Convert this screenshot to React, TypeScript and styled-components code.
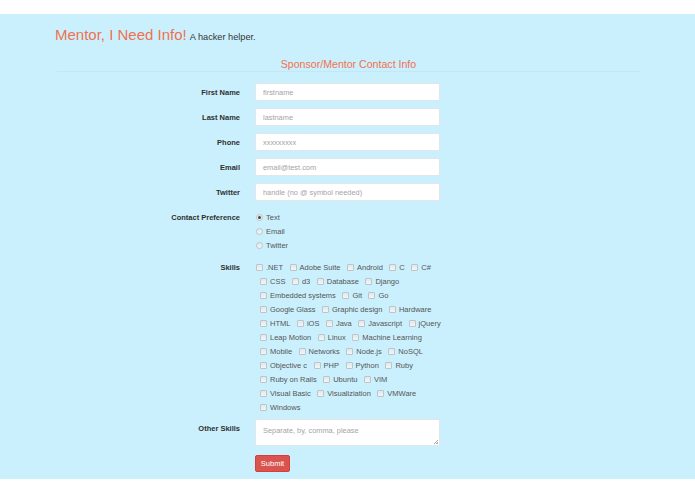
import styled, { createGlobalStyle } from 'styled-components'

const GlobalStyle = createGlobalStyle`
  body {
    margin: 0;
    background: #fff;
    font-family: "Liberation Sans", Arial, sans-serif;
  }
  * { box-sizing: border-box; }
`

const Page = styled.div`
  margin-top: 14px;
  height: 465px;
  background-color: #cbf0fd;
  padding-top: 11px;
`

const Container = styled.div`
  width: 585px;
  margin: 0 auto;
`

const Header = styled.h1`
  margin: 0;
  height: 20px;
  display: flex;
  align-items: baseline;
  font-weight: normal;
  white-space: nowrap;
`

const Title = styled.span`
  font-size: 15px;
  line-height: 20px;
  color: #f0714f;
`

const Tagline = styled.small`
  margin-left: 3px;
  font-size: 9.2px;
  color: #333;
`

const Legend = styled.h2`
  margin: 12px 0 0 2px;
  height: 15px;
  line-height: 14px;
  font-size: 10.6px;
  font-weight: normal;
  text-align: center;
  color: #f0714f;
  border-bottom: 1px solid #c3e8f5;
`

const Form = styled.form`
  margin-top: 11px;
  display: flex;
  flex-direction: column;
`

const Row = styled.div<{ $gap?: number }>`
  display: grid;
  grid-template-columns: 185px 189px;
  column-gap: 15px;
  align-items: start;
  margin-bottom: ${({ $gap }) => $gap ?? 7}px;
`

const Label = styled.label<{ $h?: number }>`
  height: ${({ $h }) => $h ?? 18}px;
  display: flex;
  align-items: center;
  justify-content: flex-end;
  font-size: 7.5px;
  font-weight: bold;
  color: #2f2f2f;
`

const Input = styled.div`
  width: 185px;
  height: 18px;
  display: flex;
  align-items: center;
  padding: 0 7px;
  background: #fff;
  border: 1px solid #e2e6e8;
  border-radius: 2px;
  font-size: 7.4px;
  color: #a4a4a4;
`

const TextArea = styled(Input)`
  position: relative;
  height: 27px;
  align-items: flex-start;
  padding-top: 6px;
`

const Grip = styled.span`
  position: absolute;
  right: 1px;
  bottom: 1px;
  width: 4px;
  height: 4px;
  background: linear-gradient(135deg, transparent 45%, #aaa 45%, #aaa 55%, transparent 55%, transparent 75%, #aaa 75%);
`

const Stack = styled.div`
  display: flex;
  flex-direction: column;
`

const Wrap = styled.div`
  display: flex;
  flex-wrap: wrap;
`

const Option = styled.span<{ $first?: boolean }>`
  height: 14px;
  display: flex;
  align-items: center;
  gap: 3px;
  margin-left: ${({ $first }) => ($first ? 1 : 5)}px;
  margin-right: 1.5px;
  font-size: 7.5px;
  color: #555;
  white-space: nowrap;
`

const RadioOption = styled(Option)`
  margin-left: 1px;
`

const Box = styled.span<{ $round?: boolean; $on?: boolean }>`
  position: relative;
  width: 7px;
  height: 7px;
  flex: none;
  border: 1px solid #bcc5c9;
  border-radius: ${({ $round }) => ($round ? '50%' : '1px')};
  background: linear-gradient(#e2e8ea, #f2f5f6);

  &::after {
    content: '';
    display: ${({ $on }) => ($on ? 'block' : 'none')};
    position: absolute;
    left: 1px;
    top: 1px;
    width: 3px;
    height: 3px;
    border-radius: 50%;
    background: #444;
  }
`

const Submit = styled.button`
  width: 35px;
  height: 17px;
  padding: 0;
  border: 1px solid #d43f3a;
  border-radius: 2px;
  background: #d9534f;
  color: #fff;
  font-family: inherit;
  font-size: 7.5px;
`

const fields = [
  ['First Name', 'firstname'],
  ['Last Name', 'lastname'],
  ['Phone', 'xxxxxxxxx'],
  ['Email', 'email@test.com'],
  ['Twitter', 'handle (no @ symbol needed)'],
]

const skills = [
  '.NET', 'Adobe Suite', 'Android', 'C', 'C#', 'CSS', 'd3', 'Database', 'Django',
  'Embedded systems', 'Git', 'Go', 'Google Glass', 'Graphic design', 'Hardware',
  'HTML', 'iOS', 'Java', 'Javascript', 'jQuery', 'Leap Motion', 'Linux',
  'Machine Learning', 'Mobile', 'Networks', 'Node.js', 'NoSQL', 'Objective c',
  'PHP', 'Python', 'Ruby', 'Ruby on Rails', 'Ubuntu', 'VIM', 'Visual Basic',
  'Visualiziation', 'VMWare', 'Windows',
]

export default function App() {
  return (
    <>
      <GlobalStyle />
      <Page>
        <Container>
          <Header>
            <Title>Mentor, I Need Info!</Title>
            <Tagline>A hacker helper.</Tagline>
          </Header>
          <Legend>Sponsor/Mentor Contact Info</Legend>
          <Form>
            {fields.map(([label, placeholder], i) => (
              <Row key={label} $gap={i === fields.length - 1 ? 9 : 7}>
                <Label>{label}</Label>
                <Input>{placeholder}</Input>
              </Row>
            ))}
            <Row $gap={8}>
              <Label $h={14}>Contact Preference</Label>
              <Stack>
                {['Text', 'Email', 'Twitter'].map((p, i) => (
                  <RadioOption key={p}>
                    <Box $round $on={i === 0} />
                    {p}
                  </RadioOption>
                ))}
              </Stack>
            </Row>
            <Row $gap={5}>
              <Label $h={14}>Skills</Label>
              <Wrap>
                {skills.map((s, i) => (
                  <Option key={s} $first={i === 0}>
                    <Box />
                    {s}
                  </Option>
                ))}
              </Wrap>
            </Row>
            <Row $gap={9}>
              <Label>Other Skills</Label>
              <TextArea>
                Separate, by, comma, please
                <Grip />
              </TextArea>
            </Row>
            <Row>
              <span />
              <Submit type="button">Submit</Submit>
            </Row>
          </Form>
        </Container>
      </Page>
    </>
  )
}
